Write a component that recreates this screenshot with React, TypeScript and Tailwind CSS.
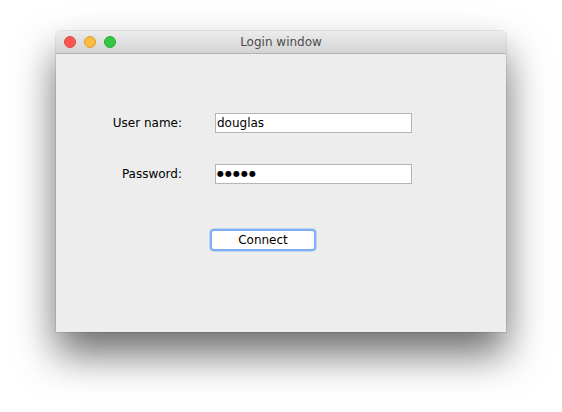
export default function App() {
  return (
    <div className="w-[562px] h-[412px] bg-white pt-[31px] pl-[56px] overflow-hidden" style={{ fontFamily: '"DejaVu Sans", "Liberation Sans", sans-serif' }}>
      <div className="w-[450px] h-[301px] flex flex-col rounded-t-[5px] bg-[#ededed] shadow-[0_22px_40px_rgba(0,0,0,0.58),0_0_0_1px_rgba(0,0,0,0.08)]">
        <div className="relative h-[23px] flex items-center rounded-t-[5px] bg-gradient-to-b from-[#ececec] to-[#d4d4d4] border-b border-[#b4b4b4]">
          <div className="flex items-center gap-[8px] pl-[8px]">
            <span className="w-[12px] h-[12px] rounded-full bg-[#fc5753] border border-[#df4744]" />
            <span className="w-[12px] h-[12px] rounded-full bg-[#fdbc40] border border-[#de9f34]" />
            <span className="w-[12px] h-[12px] rounded-full bg-[#33c748] border border-[#27aa35]" />
          </div>
          <div className="absolute inset-0 flex items-center justify-center text-[12px] text-[#4d4d4d] pointer-events-none">Login window</div>
        </div>
        <div className="flex flex-col pt-[59px]">
          <div className="flex items-center h-[20px]">
            <div className="w-[126px] text-right text-[12px] text-black">User name:</div>
            <div className="ml-[33px] w-[197px] h-[20px] bg-white border border-[#b5b5b5] flex items-center pl-[1px] text-[12px] text-black">douglas</div>
          </div>
          <div className="flex items-center h-[20px] mt-[31px]">
            <div className="w-[126px] text-right text-[12px] text-black">Password:</div>
            <div className="ml-[33px] w-[197px] h-[20px] bg-white border border-[#b5b5b5] flex items-center pl-[1px] text-[8px] text-black tracking-[1px]">●●●●●</div>
          </div>
          <div className="mt-[45px] ml-[154px] w-[106px] h-[22px] rounded-[4px] bg-white border-[2px] border-[#7fb0f5] shadow-[0_0_0_1px_rgba(120,170,240,0.35)] flex items-center justify-center text-[12px] text-black">Connect</div>
        </div>
      </div>
    </div>
  );
}
